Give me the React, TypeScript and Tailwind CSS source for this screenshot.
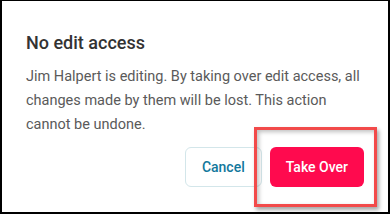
import React from 'react';

export default function App() {
  return (
    <div className="relative w-[390px] h-[214px] overflow-hidden bg-white border-t border-l-2 border-r-2 border-b-2 border-black font-['Roboto',sans-serif]">
      <div className="px-6 pt-[30px]">
        <h1 className="text-[18px] leading-[24px] font-medium text-[#333333]">No edit access</h1>
        <p className="mt-[10px] text-[14.5px] leading-[24px] text-[#5a5a5a]">
          Jim Halpert is editing. By taking over edit access, all changes made by them will be lost. This action cannot be undone.
        </p>
        <div className="mt-[10px] flex justify-end gap-2">
          <button className="h-10 px-4 rounded-md border border-[#d3e6ea] bg-white text-[14px] font-medium text-[#12789c]">
            Cancel
          </button>
          <button className="h-10 px-4 rounded-md bg-[#ff0a4e] text-[14px] font-medium text-white">
            Take Over
          </button>
        </div>
      </div>
      {/* highlight annotation */}
      <div className="absolute left-[252px] top-[126px] w-[123px] h-[80px] border-[3px] border-[#f24a4a] shadow-[2px_3px_4px_rgba(0,0,0,0.35),inset_2px_2px_4px_rgba(0,0,0,0.25)]" />
    </div>
  );
}
